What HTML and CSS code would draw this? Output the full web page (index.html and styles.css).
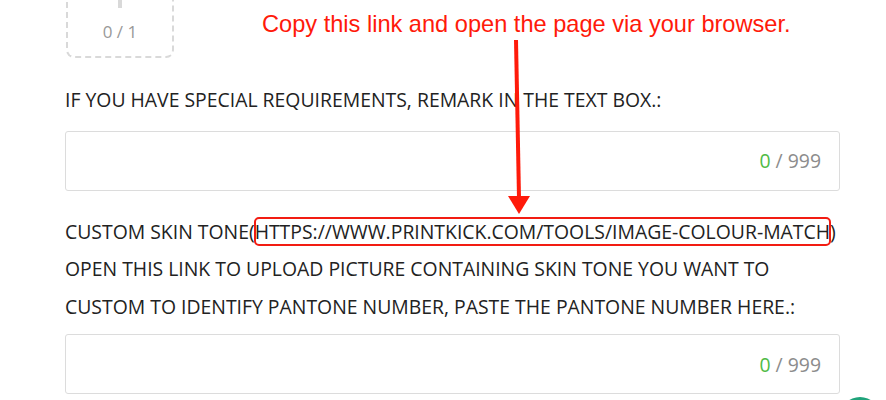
FILE: index.html
```html
<!DOCTYPE html>
<html lang="en">
<head>
    <meta charset="UTF-8">
    <title>Product Options</title>
    <link rel="stylesheet" href="styles.css">
</head>
<body>
    <div class="page">
        <div class="upload-box">
            <span class="plus"></span>
            <span class="upload-count">0 / 1</span>
        </div>

        <div class="field first">
            <label class="field-label">IF YOU HAVE SPECIAL REQUIREMENTS, REMARK IN THE TEXT BOX.:</label>
            <div class="text-box">
                <span class="counter"><span class="current">0</span> / 999</span>
            </div>
        </div>

        <div class="field">
            <label class="field-label skin">CUSTOM SKIN TONE(<span class="marked">HTTPS://WWW.PRINTKICK.COM/TOOLS/IMAGE-COLOUR-MATCH</span>) OPEN THIS LINK TO UPLOAD PICTURE CONTAINING SKIN TONE YOU WANT TO CUSTOM TO IDENTIFY PANTONE NUMBER, PASTE THE PANTONE NUMBER HERE.:</label>
            <div class="text-box">
                <span class="counter"><span class="current">0</span> / 999</span>
            </div>
        </div>
    </div>

    <!-- annotation layer -->
    <div class="note">Copy this link and open the page via your browser.</div>
    <svg class="arrow" width="40" height="190" viewBox="0 0 40 190">
        <line x1="18" y1="2" x2="21" y2="160" stroke="#ff1a0a" stroke-width="4"/>
        <polygon points="10,158 32,158 21,176" fill="#ff1a0a"/>
    </svg>
    <span class="chat-btn"></span>
</body>
</html>
```
FILE: styles.css
```css
/* Page */
body {
    margin: 0;
    background: #fff;
    font-family: "Open Sans", "Noto Sans", sans-serif;
    color: #222;
    overflow: hidden;
}

.page {
    width: 775px;
    margin-left: 65px;
    margin-top: -50px;
}

/* Upload box */
.upload-box {
    position: relative;
    width: 104px;
    height: 104px;
    margin-left: 1px;
    border: 2px dashed #d9d9d9;
    border-radius: 8px;
    display: flex;
    align-items: flex-end;
    justify-content: center;
}

.plus {
    position: absolute;
    left: 50px;
    top: 20px;
    width: 4px;
    height: 36px;
    background: #d9d9d9;
}

.upload-count {
    font-size: 17px;
    line-height: 24px;
    color: #999;
    margin-bottom: 12px;
}

/* Fields */
.field {
    margin-top: 22px;
}

.field.first {
    margin-top: 23px;
}

.field-label {
    display: block;
    font-size: 19.4px;
    line-height: 37.5px;
    margin-bottom: 12px;
}

.skin {
    margin-bottom: 9px;
}

.marked {
    outline: 2px solid #f21c12;
    outline-offset: -1px;
    border-radius: 4px;
}

.text-box {
    height: 58px;
    border: 1px solid #dcdcdc;
    border-radius: 3px;
    display: flex;
    align-items: center;
    justify-content: flex-end;
    padding-right: 18px;
}

.counter {
    font-size: 19.4px;
    color: #8c8c8c;
}

.counter .current {
    color: #4fbb45;
}

/* Annotation */
.note {
    position: absolute;
    left: 262px;
    top: 11px;
    font-family: "Liberation Sans", Arial, sans-serif;
    font-size: 23.6px;
    color: #ff1a0a;
}

.arrow {
    position: absolute;
    left: 498px;
    top: 38px;
}

.chat-btn {
    position: absolute;
    left: 840px;
    top: 397px;
    width: 40px;
    height: 40px;
    border-radius: 50%;
    background: #1fa37a;
}
```
